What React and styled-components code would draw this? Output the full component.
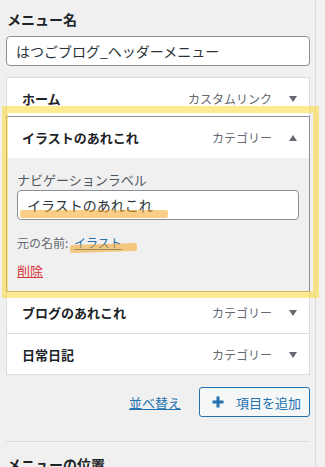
import React from "react";
import styled, { createGlobalStyle } from "styled-components";

const GlobalStyle = createGlobalStyle`
  html, body {
    margin: 0;
    padding: 0;
    background: #f0f0f0;
  }
  body {
    font-family: "Noto Sans CJK JP", "Noto Sans", sans-serif;
    color: #1d2327;
  }
`;

const items = [
  { title: "ホーム", type: "カスタムリンク", h: 38 },
  { title: "イラストのあれこれ", type: "カテゴリー", open: true, h: 41 },
  { title: "ブログのあれこれ", type: "カテゴリー", h: 41 },
  { title: "日常日記", type: "カテゴリー", h: 40 },
];

function Arrow({ up }) {
  return (
    <ArrowIcon width="8" height="6" viewBox="0 0 8 6">
      <path d={up ? "M0 6 L4 0 L8 6 Z" : "M0 0 L8 0 L4 6 Z"} fill="#646970" />
    </ArrowIcon>
  );
}

function Plus() {
  return (
    <svg width="12" height="12" viewBox="0 0 12 12">
      <path d="M6 0.5 V11.5 M0.5 6 H11.5" stroke="#2271b1" strokeWidth="3" />
    </svg>
  );
}

export default function App() {
  return (
    <Page>
      <GlobalStyle />
      <Main>
        <Heading>メニュー名</Heading>
        <NameInput>はつごブログ_ヘッダーメニュー</NameInput>
        <List>
          {items.map((item, i) =>
            item.open ? (
              <Expanded key={i}>
                <Row $h={item.h}>
                  <ItemTitle>{item.title}</ItemTitle>
                  <ItemType>{item.type}</ItemType>
                  <Arrow up />
                </Row>
                <Settings>
                  <FieldLabel>ナビゲーションラベル</FieldLabel>
                  <FieldInput>{item.title}</FieldInput>
                  <Original>
                    元の名前: <BlueLink>イラスト</BlueLink>
                  </Original>
                  <DeleteLink>削除</DeleteLink>
                </Settings>
              </Expanded>
            ) : (
              <Row key={i} $h={item.h} $divider={i === 3}>
                <ItemTitle>{item.title}</ItemTitle>
                <ItemType>{item.type}</ItemType>
                <Arrow />
              </Row>
            )
          )}
        </List>
        <Actions>
          <BlueLink $size={13}>並べ替え</BlueLink>
          <AddButton>
            <Plus />
            項目を追加
          </AddButton>
        </Actions>
        <Divider />
        <Heading>メニューの位置</Heading>

        <HighlightBox />
        <Marker style={{ left: 20, top: 210, width: 148 }} />
        <Marker style={{ left: 70, top: 244, width: 67, transform: "rotate(-2deg)" }} />
      </Main>
      <Side />
    </Page>
  );
}

const Page = styled.div`
  display: flex;
  min-height: 100vh;
  overflow: hidden;
`;

const Main = styled.div`
  position: relative;
  width: 304px;
  padding: 9px 5px 0 6px;
  flex-shrink: 0;
`;

const Side = styled.div`
  flex: 1;
  border-left: 1px solid #dcdcde;
`;

const Heading = styled.div`
  font-size: 14px;
  font-weight: 600;
  line-height: 20px;
  padding-left: 1px;
  color: #1d2327;
`;

const NameInput = styled.div`
  margin-top: 7px;
  height: 30px;
  box-sizing: border-box;
  border: 1px solid #8c8f94;
  border-radius: 4px;
  background: #fff;
  padding: 0 9px;
  font-size: 14px;
  line-height: 28px;
  color: #2c3338;
`;

const List = styled.div`
  margin-top: 11px;
  background: #fff;
  border: 1px solid #dcdcde;
`;

const Row = styled.div`
  display: flex;
  align-items: flex-start;
  height: ${(p) => p.$h}px;
  box-sizing: border-box;
  padding: 11px 12px 0 15px;
  background: #fff;
  border-top: ${(p) => (p.$divider ? "1px solid #dcdcde" : "none")};
  height: ${(p) => (p.$divider ? p.$h + 1 : p.$h)}px;
`;

const ItemTitle = styled.span`
  flex: 1;
  font-size: 13px;
  font-weight: 700;
  line-height: 20px;
  color: #1d2327;
`;

const ItemType = styled.span`
  font-size: 12px;
  line-height: 20px;
  color: #646970;
  margin-right: 17px;
`;

const ArrowIcon = styled.svg`
  margin-top: 7px;
`;

const Expanded = styled.div`
  margin: 0 -1px;
  border: 1px solid #8c8f94;
`;

const Settings = styled.div`
  background: #f0f0f0;
  padding: 12px 10px 10px 10px;
  height: 133px;
  box-sizing: border-box;
`;

const FieldLabel = styled.div`
  font-size: 13px;
  line-height: 20px;
  color: #50575e;
`;

const FieldInput = styled.div`
  height: 30px;
  box-sizing: border-box;
  border: 1px solid #8c8f94;
  border-radius: 4px;
  background: #fff;
  padding: 0 9px;
  font-size: 14px;
  line-height: 28px;
  color: #2c3338;
`;

const Original = styled.div`
  margin-top: 13px;
  font-size: 12px;
  line-height: 20px;
  color: #646970;
`;

const BlueLink = styled.span`
  color: #2271b1;
  text-decoration: underline;
  font-size: ${(p) => p.$size || 12}px;
  margin-left: 3px;
`;

const DeleteLink = styled.div`
  margin-top: 8px;
  font-size: 13px;
  line-height: 20px;
  color: #d63638;
  text-decoration: underline;
  width: max-content;
`;

const Actions = styled.div`
  display: flex;
  justify-content: flex-end;
  align-items: center;
  gap: 18px;
  margin-top: 12px;
`;

const AddButton = styled.div`
  display: flex;
  align-items: center;
  gap: 12px;
  width: 111px;
  height: 30px;
  box-sizing: border-box;
  padding-left: 12px;
  border: 1px solid #2271b1;
  border-radius: 3px;
  background: #f6f7f7;
  font-size: 13px;
  color: #2271b1;
`;

const Divider = styled.div`
  margin-top: 24px;
  margin-bottom: 12px;
  border-top: 1px solid #dcdcde;
`;

const HighlightBox = styled.div`
  position: absolute;
  left: 2px;
  top: 106px;
  width: 317px;
  height: 192px;
  box-sizing: border-box;
  border-style: solid;
  border-width: 7px 6px 7px 6px;
  border-color: rgba(253, 216, 53, 0.55);
  pointer-events: none;
`;

const Marker = styled.div`
  position: absolute;
  height: 8px;
  background: rgba(245, 166, 35, 0.55);
  border-radius: 2px;
  pointer-events: none;
`;
